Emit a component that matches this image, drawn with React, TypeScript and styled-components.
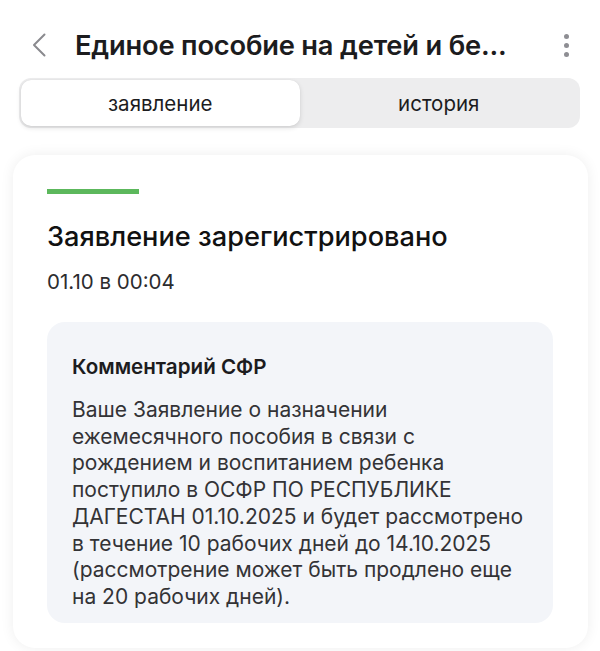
import React, { useState } from "react";
import styled, { createGlobalStyle } from "styled-components";

const GlobalStyle = createGlobalStyle`
  body {
    margin: 0;
    background: #ffffff;
    font-family: Inter, "Noto Sans", sans-serif;
    -webkit-font-smoothing: antialiased;
  }
`;

const commentLines = [
  "Ваше Заявление о назначении",
  "ежемесячного пособия в связи с",
  "рождением и воспитанием ребенка",
  "поступило в ОСФР ПО РЕСПУБЛИКЕ",
  "ДАГЕСТАН 01.10.2025 и будет рассмотрено",
  "в течение 10 рабочих дней до 14.10.2025",
  "(рассмотрение может быть продлено еще",
  "на 20 рабочих дней).",
];

const tabs = ["заявление", "история"];

export default function App() {
  const [activeTab, setActiveTab] = useState<number>(0);

  return (
    <Page>
      <GlobalStyle />
      <Header>
        <BackButton aria-label="назад">
          <svg width="16" height="24" viewBox="0 0 16 24" fill="none">
            <path
              d="M13.5 1.5L3 12L13.5 22.5"
              stroke="#8a8a8e"
              strokeWidth="2"
              strokeLinecap="round"
              strokeLinejoin="round"
            />
          </svg>
        </BackButton>
        <Title>Единое пособие на детей и бе...</Title>
        <MoreButton aria-label="ещё">
          <Dot />
          <Dot />
          <Dot />
        </MoreButton>
      </Header>

      <Segmented>
        {tabs.map((tab, index) => (
          <Segment
            key={tab}
            $active={activeTab === index}
            onClick={() => setActiveTab(index)}
          >
            {tab}
          </Segment>
        ))}
      </Segmented>

      <Card>
        <StatusBar />
        <StatusTitle>Заявление зарегистрировано</StatusTitle>
        <StatusDate>01.10 в 00:04</StatusDate>
        <Comment>
          <CommentTitle>Комментарий СФР</CommentTitle>
          <CommentText>
            {commentLines.map((line, index) => (
              <CommentLine key={index}>{line}</CommentLine>
            ))}
          </CommentText>
        </Comment>
      </Card>
    </Page>
  );
}

const Page = styled.div`
  width: 600px;
  height: 651px;
  overflow: hidden;
  padding-top: 20px;
  box-sizing: border-box;
`;

const Header = styled.div`
  display: flex;
  align-items: center;
  height: 50px;
  padding: 0 30px 0 31px;
`;

const BackButton = styled.div`
  display: flex;
  align-items: center;
  width: 44px;
  height: 40px;
`;

const Title = styled.div`
  flex: 1;
  font-size: 27.3px;
  font-weight: 600;
  color: #1c1c1e;
  letter-spacing: -0.2px;
  white-space: nowrap;
`;

const MoreButton = styled.div`
  display: flex;
  flex-direction: column;
  align-items: center;
  gap: 4px;
  width: 8px;
`;

const Dot = styled.span`
  width: 5px;
  height: 5px;
  border-radius: 50%;
  background: #8e8e93;
`;

const Segmented = styled.div`
  display: grid;
  grid-template-columns: 1fr 1fr;
  margin: 8px 20px 0 19px;
  padding: 2px;
  height: 50px;
  box-sizing: border-box;
  background: #ededee;
  border-radius: 12px;
`;

const Segment = styled.div<{ $active: boolean }>`
  display: flex;
  align-items: center;
  justify-content: center;
  border-radius: 10px;
  font-size: 20.5px;
  color: #1c1c1e;
  cursor: pointer;
  background: ${(p) => (p.$active ? "#ffffff" : "transparent")};
  box-shadow: ${(p) =>
    p.$active ? "0 2px 5px rgba(0, 0, 0, 0.12), 0 0 1px rgba(0,0,0,0.1)" : "none"};
`;

const Card = styled.div`
  margin: 27px 12px 0 13px;
  padding: 34px 35px 25px 34px;
  background: #ffffff;
  border-radius: 22px;
  box-shadow: 0 0 14px rgba(0, 0, 0, 0.07);
`;

const StatusBar = styled.div`
  width: 92px;
  height: 5px;
  background: #5cb85c;
`;

const StatusTitle = styled.div`
  margin-top: 27px;
  font-size: 27.2px;
  font-weight: 500;
  color: #111111;
  line-height: 32px;
`;

const StatusDate = styled.div`
  margin-top: 17px;
  font-size: 20.5px;
  color: #2c2c2e;
  line-height: 24px;
`;

const Comment = styled.div`
  margin-top: 28px;
  padding: 33px 25px 12px;
  background: #f3f5f9;
  border-radius: 18px;
`;

const CommentTitle = styled.div`
  font-size: 20.6px;
  font-weight: 600;
  color: #1c1c1e;
  line-height: 24px;
`;

const CommentText = styled.div`
  margin-top: 18px;
  font-size: 21px;
  color: #333336;
  line-height: 26.7px;
`;

const CommentLine = styled.div`
  white-space: nowrap;
`;
